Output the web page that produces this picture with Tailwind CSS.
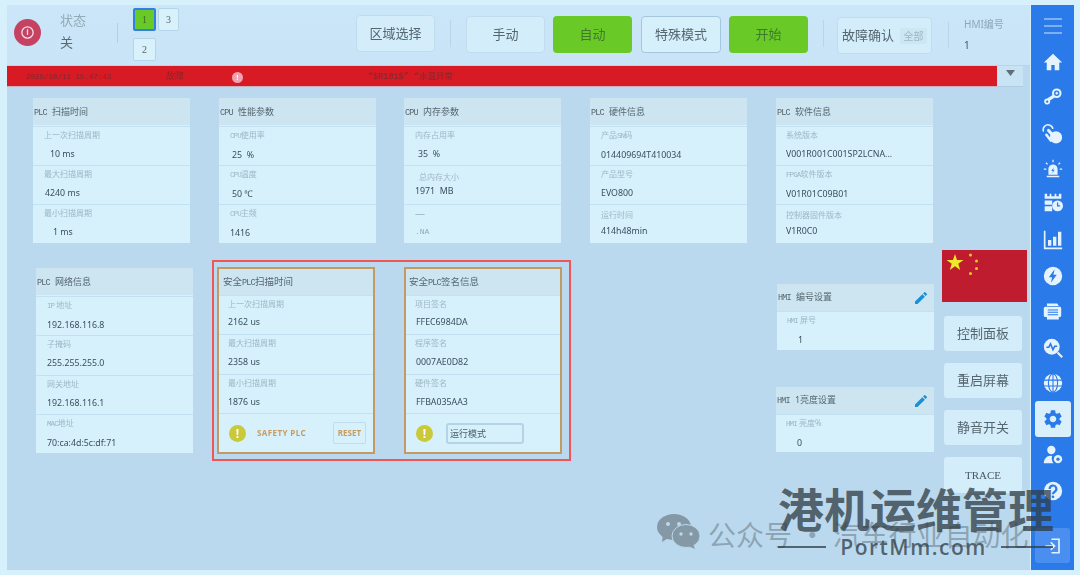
<!DOCTYPE html>
<html lang="zh-CN">
<head>
    <meta charset="UTF-8">
    <title>PLC 信息</title>
    <script src="https://cdn.jsdelivr.net/npm/@tailwindcss/browser@4"></script>
</head>
<body class="bg-[#d6f1fc] font-['Noto_Sans','Noto_Sans_CJK_SC',sans-serif]">
<div class="relative w-[1080px] h-[575px] overflow-hidden flex pl-[7px] pt-[5px] pb-[5px] pr-[6px]">

    <!-- Main -->
    <div class="w-[1023px] flex flex-col bg-[#bbd9ee] blur-[0.4px]">
        <!-- Top bar -->
        <div class="h-[61px] shrink-0 flex bg-gradient-to-b from-[#cbe6f8] to-[#c9e4f6] border-b border-[#b5d5ea] relative">
            <div class="ml-[7px] mt-[14px] w-[27px] h-[27px] rounded-full bg-[#c64262] flex items-center justify-center">
                <svg width="15" height="15" viewBox="0 0 16 16" fill="none" stroke="#f3dfe4" stroke-width="1.4"><circle cx="8" cy="8" r="6"/><path d="M8 4.500v6"/></svg>
            </div>
            <div class="ml-[19px] w-[34px] text-[13px] leading-[22px] pt-[4px]">
                <div class="text-[#93abb8]">状态</div>
                <div class="text-[#5b6b74]">关</div>
            </div>
            <div class="ml-[23px] mt-[18px] w-px h-[20px] bg-[#b2d0e3]"></div>
            <div class="ml-[15px] mt-[3px] w-[46px] flex flex-wrap gap-x-[2px] gap-y-[2px] text-[10px] font-['Liberation_Serif','Noto_Sans_CJK_SC',serif] text-[#55676f]">
                <div class="w-[23px] h-[23px] rounded-[2px] border-2 border-[#2f7fe6] bg-[#69c926] flex items-center justify-center text-[#3d6b25]">1</div>
                <div class="w-[21px] h-[23px] rounded-[2px] border border-[#b5d5ea] bg-[#d8f1fb] flex items-center justify-center">3</div>
                <div class="w-[23px] h-[23px] rounded-[2px] border border-[#b5d5ea] bg-[#d8f1fb] flex items-center justify-center">2</div>
            </div>
            <div class="ml-[177px] mt-[10px] w-[79px] h-[37px] rounded-[4px] border border-[#c0dcee] bg-[#d3eefa] flex items-center justify-center text-[13px] text-[#56666f]">区域选择</div>
            <div class="ml-[15px] mt-[15px] w-px h-[27px] bg-[#b8d6e8]"></div>
            <div class="ml-[15px] mt-[11px] w-[79px] h-[37px] rounded-[4px] border border-[#c0dcee] bg-[#d3eefa] flex items-center justify-center text-[13px] text-[#56666f]">手动</div>
            <div class="ml-[8px] mt-[11px] w-[79px] h-[37px] rounded-[4px] bg-[#69c926] flex items-center justify-center text-[13px] text-[#3f7a2c]">自动</div>
            <div class="ml-[9px] mt-[11px] w-[80px] h-[37px] rounded-[4px] border border-[#a5c6dc] bg-[#d6f0fb] flex items-center justify-center text-[13px] text-[#56666f]">特殊模式</div>
            <div class="ml-[8px] mt-[11px] w-[79px] h-[37px] rounded-[4px] bg-[#69c926] flex items-center justify-center text-[13px] text-[#3f7a2c]">开始</div>
            <div class="ml-[15px] mt-[15px] w-px h-[27px] bg-[#b8d6e8]"></div>
            <div class="ml-[13px] mt-[12px] w-[95px] h-[37px] rounded-[4px] border border-[#c0dcee] bg-[#d3eefa] flex items-center pl-[4px] text-[13px] text-[#56666f]">
                故障确认
                <span class="ml-[6px] w-[27px] h-[16px] rounded-[2px] bg-[#cbe7f3] text-center text-[10px] leading-[16px] text-[#9db7c4]">全部</span>
            </div>
            <div class="ml-[16px] mt-[17px] w-px h-[26px] bg-[#b8d6e8]"></div>
            <div class="ml-[15px] pt-[13px] text-[10px]">
                <div class="text-[#8ea8b6] leading-[12px]">HMI编号</div>
                <div class="mt-[9px] text-[#44555f] leading-[12px]">1</div>
            </div>
        </div>

        <!-- Alarm band -->
        <div class="h-[21px] shrink-0 flex">
            <div class="w-[990px] bg-[#d71a24] flex items-center pt-[3px] border-b border-[#c9aebd] text-[7.500px] text-[#7e2a30] font-['Liberation_Mono','Noto_Sans_CJK_SC',monospace]">
                <span class="ml-[19px] w-[120px]">2025/10/11 15:47:43</span>
                <span class="ml-[20px] w-[46px] text-[9px]">故障</span>
                <span class="ml-[20px] w-[11px] h-[11px] rounded-full bg-[#eea3b0] text-center text-white text-[8px] leading-[11px] font-bold">!</span>
                <span class="ml-[125px] text-[8.500px]">“$R101$” “水温异常</span>
            </div>
            <div class="w-[26px] h-[21px] bg-[#c8e3f3] border-b border-[#aecde2] flex justify-center pt-[4px]">
                <svg width="9" height="6" viewBox="0 0 9 6"><path d="M0 0h9L4.500 6z" fill="#5d6f7c"/></svg>
            </div>
        </div>

        <!-- First row of cards -->
        <div class="flex pl-[26px] pt-[11px] gap-[29px] text-[8.800px] text-[#3a4e5d]">
            <div class="w-[157px] h-[145px] bg-[#d6f1fc] flex flex-col gap-[1px]">
                <div class="h-[27px] bg-[#cce5f0] leading-[27px] pl-[1px] text-[9px] text-[#56666f]"><span class="text-[8.500px] tracking-[-0.800px] font-['Liberation_Mono'] mr-[5px]">PLC</span>扫描时间</div>
                <div class="h-[38px] border-t border-[#c2e2f3] pl-[11px] pt-[1px]"><div class="text-[8px] leading-[14px] text-[#9db7c4]">上一次扫描周期</div><div class="mt-[5px] ml-[6px] leading-[14px]">10 ms</div></div>
                <div class="h-[39px] border-t border-[#c2e2f3] pl-[11px] pt-[1px]"><div class="text-[8px] leading-[14px] text-[#9db7c4]">最大扫描周期</div><div class="mt-[5px] ml-px leading-[14px]">4240 ms</div></div>
                <div class="h-[39px] border-t border-[#c2e2f3] pl-[11px] pt-[1px]"><div class="text-[8px] leading-[14px] text-[#9db7c4]">最小扫描周期</div><div class="mt-[5px] ml-[9px] leading-[14px]">1 ms</div></div>
            </div>
            <div class="w-[157px] h-[145px] bg-[#d6f1fc] flex flex-col gap-[1px]">
                <div class="h-[27px] bg-[#cce5f0] leading-[27px] pl-[1px] text-[9px] text-[#56666f]"><span class="text-[8.500px] tracking-[-0.800px] font-['Liberation_Mono'] mr-[5px]">CPU</span>性能参数</div>
                <div class="h-[38px] border-t border-[#c2e2f3] pl-[11px] pt-[1px]"><div class="text-[8px] leading-[14px] text-[#9db7c4]"><span class="text-[7.500px] tracking-[-0.900px] font-['Liberation_Mono']">CPU</span>使用率</div><div class="mt-[5px] ml-[2px] leading-[14px]">25 &nbsp;%</div></div>
                <div class="h-[39px] border-t border-[#c2e2f3] pl-[11px] pt-[1px]"><div class="text-[8px] leading-[14px] text-[#9db7c4]"><span class="text-[7.500px] tracking-[-0.900px] font-['Liberation_Mono']">CPU</span>温度</div><div class="mt-[5px] ml-[2px] leading-[14px]">50 ℃</div></div>
                <div class="h-[39px] border-t border-[#c2e2f3] pl-[11px] pt-[1px]"><div class="text-[8px] leading-[14px] text-[#9db7c4]"><span class="text-[7.500px] tracking-[-0.900px] font-['Liberation_Mono']">CPU</span>主频</div><div class="mt-[5px] leading-[14px]">1416</div></div>
            </div>
            <div class="w-[157px] h-[145px] -ml-px bg-[#d6f1fc] flex flex-col gap-[1px]">
                <div class="h-[27px] bg-[#cce5f0] leading-[27px] pl-[1px] text-[9px] text-[#56666f]"><span class="text-[8.500px] tracking-[-0.800px] font-['Liberation_Mono'] mr-[5px]">CPU</span>内存参数</div>
                <div class="h-[38px] border-t border-[#c2e2f3] pl-[11px] pt-[1px]"><div class="text-[8px] leading-[14px] text-[#9db7c4]">内存占用率</div><div class="mt-[5px] ml-[3px] leading-[14px]">35 &nbsp;%</div></div>
                <div class="h-[39px] border-t border-[#c2e2f3] pl-[11px] pt-[4px]"><div class="ml-[4px] text-[8px] leading-[14px] text-[#9db7c4]">总内存大小</div><div class="leading-[14px]">1971 &nbsp;MB</div></div>
                <div class="h-[39px] border-t border-[#c2e2f3] pl-[11px] pt-[1px]"><div class="text-[10px] leading-[14px] text-[#9db7c4]">—</div><div class="mt-[5px] text-[8px] leading-[14px] text-[#8fa9b6] font-['Liberation_Mono']">.NA</div></div>
            </div>
            <div class="w-[157px] h-[145px] bg-[#d6f1fc] flex flex-col gap-[1px]">
                <div class="h-[27px] bg-[#cce5f0] leading-[27px] pl-[1px] text-[9px] text-[#56666f]"><span class="text-[8.500px] tracking-[-0.800px] font-['Liberation_Mono'] mr-[5px]">PLC</span>硬件信息</div>
                <div class="h-[38px] border-t border-[#c2e2f3] pl-[11px] pt-[1px]"><div class="text-[8px] leading-[14px] text-[#9db7c4]">产品<span class="text-[7.500px] tracking-[-0.900px] font-['Liberation_Mono']">SN</span>码</div><div class="mt-[5px] leading-[14px]">014409694T410034</div></div>
                <div class="h-[39px] border-t border-[#c2e2f3] pl-[11px] pt-[1px]"><div class="text-[8px] leading-[14px] text-[#9db7c4]">产品型号</div><div class="mt-[5px] leading-[14px]">EVO800</div></div>
                <div class="h-[39px] border-t border-[#c2e2f3] pl-[11px] pt-[3px]"><div class="text-[8px] leading-[14px] text-[#9db7c4]">运行时间</div><div class="mt-[2px] leading-[14px]">414h48min</div></div>
            </div>
            <div class="w-[157px] h-[145px] bg-[#d6f1fc] flex flex-col gap-[1px]">
                <div class="h-[27px] bg-[#cce5f0] leading-[27px] pl-[1px] text-[9px] text-[#56666f]"><span class="text-[8.500px] tracking-[-0.800px] font-['Liberation_Mono'] mr-[5px]">PLC</span>软件信息</div>
                <div class="h-[38px] border-t border-[#c2e2f3] pl-[10px] pt-[1px]"><div class="text-[8px] leading-[14px] text-[#9db7c4]">系统版本</div><div class="mt-[5px] leading-[14px] whitespace-nowrap">V001R001C001SP2LCNA...</div></div>
                <div class="h-[39px] border-t border-[#c2e2f3] pl-[10px] pt-[1px]"><div class="text-[8px] leading-[14px] text-[#9db7c4]"><span class="text-[7.500px] tracking-[-0.900px] font-['Liberation_Mono']">FPGA</span>软件版本</div><div class="mt-[5px] leading-[14px]">V01R01C09B01</div></div>
                <div class="h-[39px] border-t border-[#c2e2f3] pl-[10px] pt-[3px]"><div class="text-[8px] leading-[14px] text-[#9db7c4]">控制器固件版本</div><div class="mt-[2px] leading-[14px]">V1R0C0</div></div>
            </div>
        </div>

        <!-- Second row -->
        <div class="flex items-start pl-[29px] mt-[7px] text-[8.800px] text-[#3a4e5d]">
            <div class="mt-[18px] w-[157px] h-[185px] bg-[#d6f1fc] flex flex-col gap-[1px]">
                <div class="h-[27px] bg-[#cce5f0] leading-[27px] pl-[1px] text-[9px] text-[#56666f]"><span class="text-[8.500px] tracking-[-0.800px] font-['Liberation_Mono'] mr-[5px]">PLC</span>网络信息</div>
                <div class="h-[38px] border-t border-[#c2e2f3] pl-[11px] pt-[1px]"><div class="text-[8px] leading-[14px] text-[#9db7c4]"><span class="text-[7.500px] tracking-[-0.900px] font-['Liberation_Mono']">IP</span> 地址</div><div class="mt-[5px] leading-[14px]">192.168.116.8</div></div>
                <div class="h-[39px] border-t border-[#c2e2f3] pl-[11px] pt-[1px]"><div class="text-[8px] leading-[14px] text-[#9db7c4]">子掩码</div><div class="mt-[5px] leading-[14px]">255.255.255.0</div></div>
                <div class="h-[39px] border-t border-[#c2e2f3] pl-[11px] pt-[1px]"><div class="text-[8px] leading-[14px] text-[#9db7c4]">网关地址</div><div class="mt-[5px] leading-[14px]">192.168.116.1</div></div>
                <div class="h-[39px] border-t border-[#c2e2f3] pl-[11px] pt-[1px]"><div class="text-[8px] leading-[14px] text-[#9db7c4]"><span class="text-[7.500px] tracking-[-0.900px] font-['Liberation_Mono']">MAC</span>地址</div><div class="mt-[5px] leading-[14px]">70:ca:4d:5c:df:71</div></div>
            </div>

            <!-- Red outlined pair -->
            <div class="ml-[19px] mt-[10px] w-[359px] h-[201px] border-2 border-[#f25555] flex pl-[3px] pt-[5px] gap-[29px]">
                <div class="w-[158px] h-[187px] bg-[#d6f1fc] border-2 border-[#c49a63] flex flex-col">
                    <div class="h-[26px] shrink-0 bg-[#cce5f0] leading-[26px] pl-[4px] text-[9.500px] text-[#56666f]">安全<span class="text-[8.500px] tracking-[-0.800px] font-['Liberation_Mono']">PLC</span>扫描时间</div>
                    <div class="h-[39px] border-t border-[#c2e2f3] pl-[9px] pt-[1px]"><div class="text-[8px] leading-[14px] text-[#9db7c4]">上一次扫描周期</div><div class="mt-[4px] leading-[14px]">2162 us</div></div>
                    <div class="h-[40px] border-t border-[#c2e2f3] pl-[9px] pt-[1px]"><div class="text-[8px] leading-[14px] text-[#9db7c4]">最大扫描周期</div><div class="mt-[5px] leading-[14px]">2358 us</div></div>
                    <div class="h-[39px] border-t border-[#c2e2f3] pl-[9px] pt-[1px]"><div class="text-[8px] leading-[14px] text-[#9db7c4]">最小扫描周期</div><div class="mt-[5px] leading-[14px]">1876 us</div></div>
                    <div class="flex-1 border-t border-[#c2e2f3] flex items-center pl-[10px]">
                        <span class="w-[17px] h-[17px] rounded-full bg-[#c9c93a] text-center text-white text-[12px] leading-[17px] font-bold">!</span>
                        <span class="ml-[11px] text-[8px] font-bold tracking-[0.4px] text-[#c99a5e]">SAFETY PLC</span>
                        <span class="ml-[27px] w-[33px] h-[22px] rounded-[2px] border border-[#c0dcee] text-center text-[8px] font-bold leading-[20px] text-[#c99a5e]">RESET</span>
                    </div>
                </div>
                <div class="w-[158px] h-[187px] bg-[#d6f1fc] border-2 border-[#c49a63] flex flex-col">
                    <div class="h-[26px] shrink-0 bg-[#cce5f0] leading-[26px] pl-[3px] text-[9.500px] text-[#56666f]">安全<span class="text-[8.500px] tracking-[-0.800px] font-['Liberation_Mono']">PLC</span>签名信息</div>
                    <div class="h-[39px] border-t border-[#c2e2f3] pl-[9px] pt-[1px]"><div class="text-[8px] leading-[14px] text-[#9db7c4]">项目签名</div><div class="mt-[4px] ml-px leading-[14px]">FFEC6984DA</div></div>
                    <div class="h-[40px] border-t border-[#c2e2f3] pl-[9px] pt-[1px]"><div class="text-[8px] leading-[14px] text-[#9db7c4]">程序签名</div><div class="mt-[5px] ml-px leading-[14px]">0007AE0D82</div></div>
                    <div class="h-[39px] border-t border-[#c2e2f3] pl-[9px] pt-[1px]"><div class="text-[8px] leading-[14px] text-[#9db7c4]">硬件签名</div><div class="mt-[5px] ml-px leading-[14px]">FFBA035AA3</div></div>
                    <div class="flex-1 border-t border-[#c2e2f3] flex items-center pl-[10px]">
                        <span class="w-[17px] h-[17px] rounded-full bg-[#c9c93a] text-center text-white text-[12px] leading-[17px] font-bold">!</span>
                        <span class="ml-[13px] w-[78px] h-[21px] rounded-[3px] border-2 border-[#b4d3e6] pl-[2px] text-[9px] leading-[17px] text-[#4c5d68]">运行模式</span>
                    </div>
                </div>
            </div>

            <!-- HMI settings -->
            <div class="ml-[206px] mt-[34px] w-[157px] flex flex-col">
                <div class="h-[66px] bg-[#d6f1fc] flex flex-col">
                    <div class="h-[27px] shrink-0 bg-[#cce5f0] flex items-center pl-px text-[9px] text-[#56666f]"><span><span class="text-[8.500px] tracking-[-0.800px] font-['Liberation_Mono'] mr-[5px]">HMI</span>编号设置</span>
                        <svg class="ml-auto mr-[5px]" width="16" height="16" viewBox="0 0 24 24" fill="#1a90d8"><path d="M3 17.250V21h3.750L17.810 9.940l-3.750-3.750L3 17.250zM20.710 7.040a1 1 0 0 0 0-1.410l-2.340-2.340a1 1 0 0 0-1.410 0l-1.830 1.830 3.750 3.750 1.830-1.830z"/></svg>
                    </div>
                    <div class="border-t border-[#c2e2f3] pl-[10px] pt-[1px]"><div class="text-[8px] leading-[14px] text-[#9db7c4]"><span class="text-[7.500px] tracking-[-0.900px] font-['Liberation_Mono']">HMI</span> 屏号</div><div class="mt-[5px] ml-[11px] leading-[14px]">1</div></div>
                </div>
                <div class="mt-[37px] -ml-px h-[65px] bg-[#d6f1fc] flex flex-col">
                    <div class="h-[27px] shrink-0 bg-[#cce5f0] flex items-center pl-px text-[9px] text-[#56666f]"><span><span class="text-[8.500px] tracking-[-0.800px] font-['Liberation_Mono'] mr-[5px]">HMI</span>1亮度设置</span>
                        <svg class="ml-auto mr-[5px]" width="16" height="16" viewBox="0 0 24 24" fill="#1a90d8"><path d="M3 17.250V21h3.750L17.810 9.940l-3.750-3.750L3 17.250zM20.710 7.040a1 1 0 0 0 0-1.410l-2.340-2.340a1 1 0 0 0-1.410 0l-1.830 1.830 3.750 3.750 1.830-1.830z"/></svg>
                    </div>
                    <div class="border-t border-[#c2e2f3] pl-[10px] pt-[1px]"><div class="text-[8px] leading-[14px] text-[#9db7c4]"><span class="text-[7.500px] tracking-[-0.900px] font-['Liberation_Mono']">HMI</span> 亮度%</div><div class="mt-[5px] ml-[11px] leading-[14px]">0</div></div>
                </div>
            </div>

            <!-- Flag and buttons -->
            <div class="ml-[8px] w-[85px] flex flex-col">
                <svg width="85" height="52" viewBox="0 0 85 52"><rect width="85" height="52" fill="#bf1c30"/><polygon fill="#eeea2a" points="13,4 15,10 21.500,10 16.300,13.800 18.200,20 13,16.200 7.800,20 9.700,13.800 4.500,10 11,10"/><circle cx="28.500" cy="5" r="1.500" fill="#eecb2a"/><circle cx="34.500" cy="11" r="1.500" fill="#eecb2a"/><circle cx="34.500" cy="18.500" r="1.500" fill="#eecb2a"/><circle cx="28.500" cy="23.500" r="1.500" fill="#eecb2a"/></svg>
                <div class="mt-[14px] ml-[2px] w-[78px] flex flex-col gap-[12px] text-[13px] text-[#56666f]">
                    <div class="h-[35px] rounded-[3px] bg-[#d3eefa] flex items-center justify-center">控制面板</div>
                    <div class="h-[35px] rounded-[3px] bg-[#d3eefa] flex items-center justify-center">重启屏幕</div>
                    <div class="h-[35px] rounded-[3px] bg-[#d3eefa] flex items-center justify-center">静音开关</div>
                    <div class="h-[36px] rounded-[3px] bg-[#d3eefa] flex items-center justify-center text-[11px] text-[#47565f] font-['Liberation_Serif',serif]">TRACE</div>
                </div>
            </div>
        </div>
    </div>

    <!-- Sidebar -->
    <div class="ml-px w-[43px] h-[565px] bg-[#2a7aea] flex flex-col items-center pt-[3px] text-[#e4f3fd] blur-[0.3px]">
        <div class="h-[35.750px] flex items-center"><svg width="18" height="16" viewBox="0 0 18 16" stroke="#cfe6fb" stroke-width="1"><path d="M0 1h18M0 8h18M0 15h18"/></svg></div>
        <div class="h-[35.750px] flex items-center"><svg width="20" height="20" viewBox="0 0 24 24" fill="currentColor"><path d="M12 2 1 12.500h3.500V22h5.500v-6.500h4V22h5.500v-9.500H23z"/></svg></div>
        <div class="h-[35.750px] flex items-center"><svg width="20" height="20" viewBox="0 0 24 24" fill="none" stroke="currentColor"><circle cx="16.500" cy="7.500" r="4.500" stroke-width="2.500"/><circle cx="16.500" cy="7.500" r="1.200" fill="currentColor"/><path d="M13 11 6 15.500" stroke-width="4"/><circle cx="5" cy="17.500" r="2.500" stroke-width="2.200"/></svg></div>
        <div class="h-[35.750px] flex items-center"><svg width="21" height="21" viewBox="0 0 24 24" fill="currentColor" stroke="currentColor" stroke-linecap="round"><path d="M7.500 8.500 12.500 14" fill="none" stroke-width="3.600"/><path d="M5 13.500 10 20" fill="none" stroke-width="3"/><circle cx="16" cy="16.500" r="7" stroke="none"/><path d="M1.500 9C.5 5 4 1.500 8 2.200 10 2.600 11.800 4 12.300 6" fill="none" stroke-width="1.800"/></svg></div>
        <div class="h-[35.750px] flex items-center"><svg width="20" height="20" viewBox="0 0 24 24" fill="currentColor"><path d="M6.500 19v-7a5.500 5.500 0 0 1 11 0v7zM4.500 20h15v2h-15z"/><path d="M13 10l-3 4.500h2l-1 3 3-4.500h-2z" fill="#2a7aea"/><path d="M12 1v3M3.500 4.500l2 2M20.500 4.500l-2 2M1 12h3M20 12h3" stroke="currentColor" stroke-width="1.500"/></svg></div>
        <div class="h-[35.750px] flex items-start pt-[6px]"><svg width="20" height="20" viewBox="0 0 24 24" fill="currentColor"><path d="M2 1v6h20V1h-3v3h-3V1h-2v3h-4V1H8v3H5V1z"/><path d="M2 9h9v5H2zM2 16h9v6H2z"/><circle cx="17.500" cy="15.500" r="6.500"/><path d="M17.500 11.500v4h3" fill="none" stroke="#2a7aea" stroke-width="1.500"/></svg></div>
        <div class="h-[35.750px] flex items-center"><svg width="20" height="20" viewBox="0 0 24 24" fill="currentColor"><path d="M1 1h2v20h20v2H1z"/><path d="M6 12h4v7H6zM12 8h4v11h-4zM18 2h4v17h-4z"/></svg></div>
        <div class="h-[35.750px] flex items-center"><svg width="20" height="20" viewBox="0 0 24 24"><circle cx="12" cy="12" r="11" fill="currentColor"/><path d="M14 4 7 13.500h4L9.500 20l7-9.500h-4z" fill="#2a7aea"/></svg></div>
        <div class="h-[35.750px] flex items-center"><svg width="19" height="19" viewBox="0 0 24 24" fill="currentColor"><path d="M5 2h13l2 3H5zM3 6h19a2 2 0 0 1 1 2v9a2 2 0 0 1-2 2h-1v3H5v-3H3a2 2 0 0 1-2-2V8a2 2 0 0 1 2-2z"/><path d="M6 10h13M6 13h13M6 16h13" stroke="#2a7aea" stroke-width="1.300"/></svg></div>
        <div class="h-[35.750px] flex items-center"><svg width="20" height="20" viewBox="0 0 24 24" fill="none"><circle cx="10.500" cy="10.500" r="9.500" fill="currentColor"/><path d="M4 11h3l2-4 3 7 2-4h3" stroke="#2a7aea" stroke-width="1.800"/><path d="M17.500 17.500 23 23" stroke="currentColor" stroke-width="2.500"/></svg></div>
        <div class="h-[35.750px] flex items-center"><svg width="20" height="20" viewBox="0 0 24 24" fill="none"><circle cx="12" cy="12" r="11" fill="currentColor"/><path d="M12 1v22M1 8.500h22M1 15.500h22" stroke="#2a7aea" stroke-width="1.300"/><ellipse cx="12" cy="12" rx="5.500" ry="11" stroke="#2a7aea" stroke-width="1.300"/></svg></div>
        <div class="h-[35.750px] flex items-center"><div class="w-[36px] h-[36px] rounded-[3px] bg-[#d9f0fb] flex items-center justify-center"><svg width="22" height="22" viewBox="0 0 24 24" fill="#2a7aea"><path d="M19.140 12.940c.04-.3.06-.61.06-.94 0-.32-.02-.64-.07-.94l2.030-1.580c.18-.14.23-.41.12-.61l-1.920-3.320c-.12-.22-.37-.29-.59-.22l-2.390.96c-.5-.38-1.030-.7-1.620-.94l-.36-2.540c-.04-.24-.24-.41-.48-.41h-3.840c-.24 0-.43.17-.47.41l-.36 2.540c-.59.24-1.130.57-1.620.94l-2.390-.96c-.22-.08-.47 0-.59.22L2.740 8.870c-.12.21-.08.47.12.61l2.030 1.580c-.05.3-.09.63-.09.94s.02.64.07.94l-2.030 1.580c-.18.14-.23.41-.12.61l1.920 3.320c.12.22.37.29.59.22l2.390-.96c.5.38 1.030.7 1.620.94l.36 2.540c.05.24.24.41.48.41h3.840c.24 0 .44-.17.47-.41l.36-2.540c.59-.24 1.130-.56 1.620-.94l2.390.96c.22.08.47 0 .59-.22l1.920-3.320c.12-.22.07-.47-.12-.61l-2.010-1.580zM12 15.600c-1.980 0-3.600-1.620-3.600-3.600s1.620-3.600 3.600-3.600 3.600 1.620 3.600 3.600-1.620 3.600-3.600 3.600z"/></svg></div></div>
        <div class="h-[35.750px] flex items-center"><svg width="20" height="20" viewBox="0 0 24 24" fill="currentColor"><circle cx="10" cy="6" r="5"/><path d="M1 22c0-5 3.500-9 8-9 1.500 0 2 .3 2 .3-1 2.500-.5 6 1.500 8.700z"/><circle cx="18" cy="17" r="5"/><circle cx="18" cy="17" r="2" fill="#2a7aea"/></svg></div>
        <div class="h-[35.750px] flex items-center"><svg width="20" height="20" viewBox="0 0 24 24"><circle cx="12" cy="12" r="11" fill="currentColor"/><path d="M8 9.500a4 4 0 1 1 6 3.400c-1.300.8-2 1.400-2 3" fill="none" stroke="#2a7aea" stroke-width="2.600"/><circle cx="12" cy="19" r="1.600" fill="#2a7aea"/></svg></div>
        <div class="mt-auto mb-[7px] w-[35px] h-[35px] rounded-[3px] bg-[#4a8ff0] flex items-center justify-center"><svg width="18" height="18" viewBox="0 0 24 24" fill="none" stroke="currentColor" stroke-width="2.200"><path d="M10 3h10v18H10M2 12h12M9 7l5 5-5 5"/></svg></div>
    </div>

    <!-- Watermark -->
    <svg class="absolute left-[657px] top-[514px]" width="43" height="35" viewBox="0 0 43 35" fill="#8498a6"><ellipse cx="17" cy="13" rx="17" ry="13"/><path d="M6 20l-1 8 8-5z"/><ellipse cx="29" cy="22" rx="14" ry="11.500" stroke="#bbd9ee" stroke-width="1"/><path d="M36 30l2 5-7-3z"/><circle cx="11" cy="10" r="2" fill="#bbd9ee"/><circle cx="22" cy="10" r="2" fill="#bbd9ee"/><circle cx="24" cy="20" r="1.700" fill="#bbd9ee"/><circle cx="34" cy="20" r="1.700" fill="#bbd9ee"/></svg>
    <div class="absolute left-[708px] top-[514px] text-[28px] leading-[40px] whitespace-nowrap text-[#6d808d]/60 font-['Noto_Sans_CJK_SC',sans-serif]">公众号 · 汽车行业自动化</div>
    <div class="absolute left-[778px] top-[478px] w-[276px] text-[46px] leading-[58px] font-bold whitespace-nowrap text-[#2f3c44]/75 font-['Noto_Sans_CJK_SC',sans-serif]">港机运维管理</div>
    <div class="absolute left-[778px] top-[532px] w-[275px] flex items-center text-[#2f3c44]/75">
        <span class="w-[48px] h-[1.500px] bg-[#2f3c44]/75"></span>
        <span class="mx-auto text-[21px] leading-[30px] font-semibold tracking-[1.500px] font-['Open_Sans',sans-serif]">PortMm.com</span>
        <span class="w-[52px] h-[1.500px] bg-[#2f3c44]/75"></span>
    </div>
</div>
</body>
</html>
